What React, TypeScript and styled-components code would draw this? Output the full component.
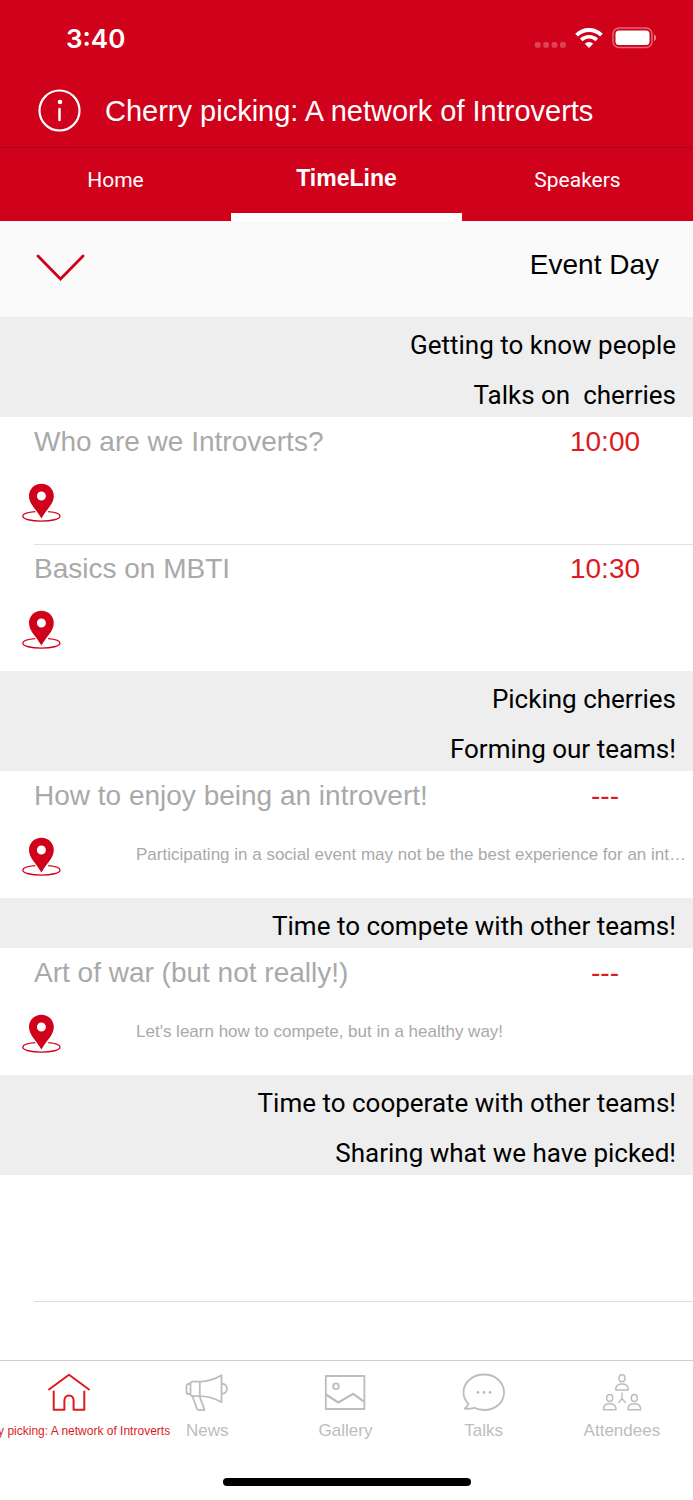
import React from "react";
import styled, { createGlobalStyle } from "styled-components";

const RED = "#d0021b";
const ACCENT = "#dc1a1f";
const MUTED = "#a9a9a9";
const TAB_GREY = "#bdbdbd";
const SANS = '"Liberation Sans", Arial, sans-serif';
const ROBOTO = 'Roboto, "Liberation Sans", sans-serif';

const GlobalStyle = createGlobalStyle`
  *, *::before, *::after { box-sizing: border-box; }
  body {
    margin: 0;
    background: #fff;
    color: #000;
    font-family: ${SANS};
  }
  button {
    border: 0;
    padding: 0;
    background: none;
    color: inherit;
    font: inherit;
    cursor: pointer;
  }
  h1, h2, h3, p { margin: 0; font-weight: 400; }
  a { color: inherit; text-decoration: none; }
  svg { display: block; flex: none; }
`;

const Screen = styled.div`
  display: flex;
  flex-direction: column;
  min-height: 100vh;
  overflow-x: hidden;
`;

const Header = styled.header`
  background: ${RED};
  color: #fff;
`;

const StatusBar = styled.div`
  display: flex;
  align-items: center;
  justify-content: space-between;
  height: 76px;
  padding: 0 36px 0 66px;
`;

const Clock = styled.time`
  padding-top: 2px;
  font: 600 26px/32px Inter, ${SANS};
`;

const StatusIcons = styled.div`
  display: flex;
  align-items: center;
  gap: 9px;
`;

const TitleBar = styled.div`
  display: flex;
  align-items: center;
  gap: 24px;
  height: 72px;
  padding: 0 38px 2px;
  border-bottom: 1px solid #b00218;
`;

const Title = styled.h1`
  font-size: 29px;
  line-height: 36px;
  white-space: nowrap;
`;

const Tabs = styled.div`
  display: grid;
  grid-template-columns: repeat(3, 1fr);
  height: 73px;
`;

const Tab = styled.button<{ $active?: boolean }>`
  padding-bottom: ${(p) => (p.$active ? 5 : 10)}px;
  border-bottom: ${(p) => (p.$active ? "8px solid #fff" : "0")};
  font: ${(p) => (p.$active ? `700 23px/28px ${SANS}` : `400 21px/28px ${ROBOTO}`)};
`;

const DayBar = styled.button`
  display: flex;
  align-items: center;
  justify-content: space-between;
  width: 100%;
  height: 96px;
  padding: 0 34px 8px 36px;
  background: #fafafa;
  font-size: 28px;
  line-height: 36px;
`;

const Timeline = styled.main`
  flex: 1;
`;

const SectionTitle = styled.h2`
  height: 50px;
  padding: 6px 17px 0;
  background: #eee;
  font-family: ${ROBOTO};
  font-size: 26px;
  line-height: 44px;
  text-align: right;
  white-space: pre;
`;

const Session = styled.article`
  position: relative;
  height: 127px;
  padding: 7px 0 0 34px;

  & + &::before {
    content: "";
    position: absolute;
    top: 0;
    left: 34px;
    right: 0;
    border-top: 1px solid #e0e0e0;
  }
`;

const SessionHead = styled.div`
  display: flex;
  justify-content: space-between;
  font-size: 28px;
  line-height: 36px;
`;

const SessionName = styled.h3`
  color: ${MUTED};
  font-size: inherit;
`;

const SessionTime = styled.span`
  width: 176px;
  color: ${ACCENT};
  text-align: center;
`;

const SessionBody = styled.div`
  display: flex;
  align-items: center;
  gap: 74px;
  margin: 23px 4px 0 -12px;
`;

const Note = styled.p`
  min-width: 0;
  overflow: hidden;
  padding-bottom: 4px;
  color: ${MUTED};
  font-size: 17px;
  line-height: 24px;
  text-overflow: ellipsis;
  white-space: nowrap;
`;

const EmptyRow = styled.div`
  height: 127px;
  margin-left: 34px;
  border-bottom: 1px solid #dcdcdc;
`;

const BottomBar = styled.footer`
  position: sticky;
  bottom: 0;
  height: 140px;
  border-top: 1px solid #cfcfcf;
  background: #fff;
`;

const NavList = styled.nav`
  display: grid;
  grid-template-columns: repeat(5, minmax(0, 1fr));
  height: 117px;
  padding-right: 2px;
`;

const NavLink = styled.a<{ $active?: boolean }>`
  display: flex;
  flex-direction: column;
  align-items: center;
  gap: 6px;
  padding-top: 10px;
  color: ${(p) => (p.$active ? ACCENT : TAB_GREY)};
  font-size: ${(p) => (p.$active ? 12 : 17)}px;
  line-height: 24px;
  white-space: nowrap;
`;

const HomeIndicator = styled.div`
  width: 248px;
  height: 8px;
  margin: 0 auto;
  border-radius: 4px;
  background: #000;
`;

const InfoIcon = () => (
  <svg width="43" height="43" viewBox="0 0 43 43" fill="none" aria-hidden="true">
    <circle cx="21.5" cy="21.5" r="20" stroke="#fff" strokeWidth="2.2" />
    <circle cx="22" cy="13" r="2.3" fill="#fff" />
    <path d="M21.5 20v11" stroke="#fff" strokeWidth="2.5" strokeLinecap="round" />
  </svg>
);

const SignalDots = () => (
  <svg width="32" height="20" viewBox="0 0 32 20" fill="#fff" fillOpacity=".25" aria-hidden="true">
    {[0, 8.4, 16.8, 25.2].map((x) => (
      <rect key={x} x={x + 0.8} y="14" width="5.8" height="5.8" rx="1.8" />
    ))}
  </svg>
);

const WifiIcon = () => (
  <svg width="28" height="20" viewBox="0 0 28 20" fill="none" stroke="#fff" aria-hidden="true">
    <path d="M1.6 7.1a17.6 17.6 0 0 1 24.8 0" strokeWidth="3.8" />
    <path d="M6.2 11.9a11.1 11.1 0 0 1 15.6 0" strokeWidth="3.6" />
    <path d="M14 20l-4.2-4.3a6 6 0 0 1 8.4 0z" fill="#fff" stroke="none" />
  </svg>
);

const BatteryIcon = () => (
  <svg width="45" height="22" viewBox="0 0 45 22" fill="none" aria-hidden="true">
    <rect x="1" y="1" width="39" height="19.5" rx="6" stroke="#fff" strokeOpacity=".4" strokeWidth="1.5" />
    <rect x="3.5" y="3.5" width="34" height="14.5" rx="3.5" fill="#fff" />
    <path d="M42 7.5c2.8 1 2.8 5.5 0 6.5z" fill="#fff" fillOpacity=".5" />
  </svg>
);

const Chevron = () => (
  <svg width="49" height="32" viewBox="0 0 49 32" fill="none" aria-hidden="true">
    <path d="M2 7L24.500 30L47 7" stroke={RED} strokeWidth="2.8" strokeLinecap="round" />
  </svg>
);

const PinIcon = () => (
  <svg width="40" height="40" viewBox="0 0 40 40" fill="none" aria-hidden="true">
    <path
      d="M13.3 28.7C5.500 29.300 .8 31 .8 33.200C.8 36 9 38.200 19.400 38.200C29.800 38.200 38 36 38 33.200C38 31 33.500 29.300 26.200 28.700"
      stroke={RED}
      strokeWidth="1.3"
    />
    <path
      fillRule="evenodd"
      d="M19.400 .7C12.300 .7 7 6.200 7 13C7 21 14 26 19.400 35.500C24.800 26 31.800 21 31.800 13C31.800 6.200 26.500 .7 19.400 .7ZM19.400 8.500A4.500 4.500 0 1 1 19.400 17.500A4.500 4.500 0 1 1 19.400 8.500Z"
      fill={RED}
    />
  </svg>
);

const NavSvg = styled.svg.attrs({
  width: 44,
  height: 42,
  viewBox: "0 0 44 42",
  fill: "none",
  stroke: "currentColor",
  "aria-hidden": true,
})`
  stroke-width: 1.8px;
  stroke-linecap: round;
  stroke-linejoin: round;
`;

const HomeIcon = () => (
  <NavSvg>
    <path strokeWidth="2" d="M2 18.500L22 3.800L42 18.500M6.700 20.500V38.800H17.400V29.500C17.400 22.800 26.600 22.800 26.600 29.500V38.800H37.300V20.500" />
  </NavSvg>
);

const NewsIcon = () => (
  <NavSvg>
    <path d="M5.500 12.500C5.500 11.500 6.500 10.700 7.500 10.700H15C22 10.500 29.500 8.500 36.500 4.300V31.200C29.500 27.300 22 25.200 15 25.200H7.500C6.500 25.200 5.500 24.400 5.500 23.500ZM14.800 10.700V25.200M5.500 13H3.500C2 13 1.500 13.800 1.500 15V21C1.500 22.200 2 23 3.500 23H5.500M36.500 12.800C40 12.500 42 14.800 42 17.700S40 22.900 36.500 22.600" />
    <path d="M7.500 25.200L12 38C12.300 38.800 13 39.200 13.700 39.200H18.500C19.200 39.200 19.500 38.600 19.200 37.900L14.500 25.200" />
  </NavSvg>
);

const GalleryIcon = () => (
  <NavSvg>
    <rect x="2.800" y="5" width="38.600" height="33" />
    <circle cx="13" cy="15.300" r="2.900" />
    <path d="M3 23.500L15.300 31.500L30.300 22.800L41 30.700" strokeWidth="2.2" />
  </NavSvg>
);

const TalksIcon = () => (
  <NavSvg>
    <path d="M22 3.500C33.500 3.500 42 11.500 42 21.500S33.500 39 22 39C18.500 39 15.500 38.400 12.500 36.800C9.500 37.500 5.500 38.300 2.800 37.600C4.800 36.200 6 34.600 6.300 32.700C3.300 29.600 1.500 25.800 1.500 21.500C1.500 11.500 10.500 3.500 22 3.500Z" />
    <g fill="currentColor" stroke="none">
      <circle cx="16" cy="21.400" r="1.400" />
      <circle cx="22" cy="21.400" r="1.400" />
      <circle cx="28" cy="21.400" r="1.400" />
    </g>
  </NavSvg>
);

const AttendeesIcon = () => (
  <NavSvg>
    {[
      [22, 3.5],
      [9.700, 23.2],
      [34.300, 23.2],
    ].map(([x, y]) => (
      <g key={x} transform={`translate(${x} ${y})`} strokeWidth="1.5">
        <ellipse cx="0" cy="3.800" rx="3" ry="3.500" />
        <path d="M-6.200 15.500V14.500C-6.200 11.300-3.500 9.500 0 9.500S6.200 11.300 6.200 14.500V15.500Z" />
      </g>
    ))}
    <path strokeWidth="1.4" d="M22 22V27.500L18.800 31.500M22 27.500L25.200 31.500" />
  </NavSvg>
);

type SessionData = { name: string; time: string; note?: string };
type Block = { headings: string[]; sessions: SessionData[] };

const blocks: Block[] = [
  {
    headings: ["Getting to know people", "Talks on  cherries"],
    sessions: [
      { name: "Who are we Introverts?", time: "10:00" },
      { name: "Basics on MBTI", time: "10:30" },
    ],
  },
  {
    headings: ["Picking cherries", "Forming our teams!"],
    sessions: [
      {
        name: "How to enjoy being an introvert!",
        time: "---",
        note: "Participating in a social event may not be the best experience for an int…",
      },
    ],
  },
  {
    headings: ["Time to compete with other teams!"],
    sessions: [
      {
        name: "Art of war (but not really!)",
        time: "---",
        note: "Let's learn how to compete, but in a healthy way!",
      },
    ],
  },
  {
    headings: ["Time to cooperate with other teams!", "Sharing what we have picked!"],
    sessions: [],
  },
];

const navItems = [
  { label: "Cherry picking: A network of Introverts", Icon: HomeIcon, active: true },
  { label: "News", Icon: NewsIcon },
  { label: "Gallery", Icon: GalleryIcon },
  { label: "Talks", Icon: TalksIcon },
  { label: "Attendees", Icon: AttendeesIcon },
];

export default function App() {
  return (
    <Screen>
      <GlobalStyle />
      <Header>
        <StatusBar>
          <Clock>3:40</Clock>
          <StatusIcons>
            <SignalDots />
            <WifiIcon />
            <BatteryIcon />
          </StatusIcons>
        </StatusBar>
        <TitleBar>
          <button type="button" aria-label="About this event">
            <InfoIcon />
          </button>
          <Title>Cherry picking: A network of Introverts</Title>
        </TitleBar>
        <Tabs role="tablist">
          <Tab type="button" role="tab" aria-selected={false}>Home</Tab>
          <Tab type="button" role="tab" aria-selected $active>TimeLine</Tab>
          <Tab type="button" role="tab" aria-selected={false}>Speakers</Tab>
        </Tabs>
      </Header>

      <Timeline>
        <DayBar type="button" aria-expanded>
          <Chevron />
          <span>Event Day</span>
        </DayBar>
        {blocks.map((block) => (
          <section key={block.headings[0]}>
            {block.headings.map((heading) => (
              <SectionTitle key={heading}>{heading}</SectionTitle>
            ))}
            {block.sessions.map((session) => (
              <Session key={session.name}>
                <SessionHead>
                  <SessionName>{session.name}</SessionName>
                  <SessionTime>{session.time}</SessionTime>
                </SessionHead>
                <SessionBody>
                  <button type="button" aria-label="Show location">
                    <PinIcon />
                  </button>
                  {session.note && <Note>{session.note}</Note>}
                </SessionBody>
              </Session>
            ))}
          </section>
        ))}
        <EmptyRow />
      </Timeline>

      <BottomBar>
        <NavList aria-label="Main">
          {navItems.map(({ label, Icon, active }) => (
            <NavLink key={label} href="#" $active={active} aria-current={active ? "page" : undefined}>
              <Icon />
              <span>{label}</span>
            </NavLink>
          ))}
        </NavList>
        <HomeIndicator />
      </BottomBar>
    </Screen>
  );
}
